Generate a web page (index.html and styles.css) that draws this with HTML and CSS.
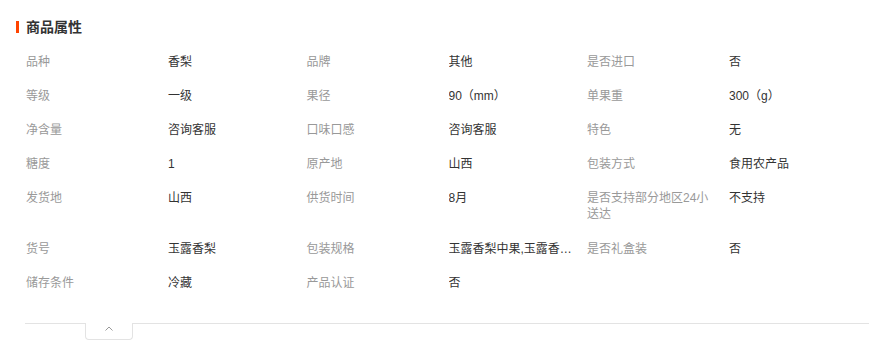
FILE: index.html
```html
<!DOCTYPE html>
<html lang="zh-CN">
<head>
<meta charset="utf-8">
<title>商品属性</title>
<link rel="stylesheet" href="styles.css">
</head>
<body>
<section class="attrs">
  <h2 class="attrs-title">商品属性</h2>
  <dl class="attrs-grid">
    <dt>品种</dt><dd>香梨</dd>
    <dt>品牌</dt><dd>其他</dd>
    <dt>是否进口</dt><dd>否</dd>

    <dt>等级</dt><dd>一级</dd>
    <dt>果径</dt><dd>90（mm）</dd>
    <dt>单果重</dt><dd>300（g）</dd>

    <dt>净含量</dt><dd>咨询客服</dd>
    <dt>口味口感</dt><dd>咨询客服</dd>
    <dt>特色</dt><dd>无</dd>

    <dt>糖度</dt><dd>1</dd>
    <dt>原产地</dt><dd>山西</dd>
    <dt>包装方式</dt><dd>食用农产品</dd>

    <dt>发货地</dt><dd>山西</dd>
    <dt>供货时间</dt><dd>8月</dd>
    <dt class="wrap">是否支持部分地区24小送达</dt><dd>不支持</dd>

    <dt>货号</dt><dd>玉露香梨</dd>
    <dt>包装规格</dt><dd title="玉露香梨中果,玉露香梨大果">玉露香梨中果,玉露香梨大果</dd>
    <dt>是否礼盒装</dt><dd>否</dd>

    <dt>储存条件</dt><dd>冷藏</dd>
    <dt>产品认证</dt><dd>否</dd>
  </dl>
  <div class="attrs-foot">
    <button class="fold-tab" type="button" aria-label="收起">
      <svg width="8" height="5" viewBox="0 0 8 5"><polyline points="0.5,4.5 4,1 7.5,4.5" fill="none" stroke="#999" stroke-width="1"/></svg>
    </button>
  </div>
</section>
</body>
</html>
```

FILE: styles.css
```css
* { box-sizing: border-box; }

html, body {
  margin: 0;
  padding: 0;
  background: #fff;
}

body {
  font-family: "Liberation Sans", "Noto Sans CJK SC", sans-serif;
  font-size: 12px;
  color: #333;
}

.attrs {
  padding: 20px 15px 0 16px;
}

.attrs-title {
  display: flex;
  align-items: center;
  gap: 7px;
  margin: 0;
  height: 14px;
  font-size: 14px;
  line-height: 14px;
  font-weight: bold;
  color: #333;
}

.attrs-title::before {
  content: "";
  width: 3px;
  height: 12px;
  background: #ff4400;
}

.attrs-grid {
  display: grid;
  grid-template-columns: 142px 138.5px 142px 138.5px 142px 1fr;
  margin: 11px 0 0 10px;
  padding: 0;
}

.attrs-grid dt,
.attrs-grid dd {
  margin: 0;
  padding: 9px 0;
  line-height: 16px;
}

.attrs-grid dt {
  color: #999;
  width: 126px;
}

.attrs-grid dt.wrap {
  padding-bottom: 10px;
}

.attrs-grid dd {
  color: #333;
  max-width: 125px;
  white-space: nowrap;
  overflow: hidden;
  text-overflow: ellipsis;
}

.attrs-foot {
  margin: 23px 0 0 9px;
  width: 844px;
  border-top: 1px solid #e3e3e3;
  padding-left: 60px;
  height: 24px;
}

.fold-tab {
  display: flex;
  align-items: flex-start;
  justify-content: center;
  margin-top: -1px;
  width: 48px;
  height: 17px;
  padding: 3px 0 0;
  background: #fff;
  border: 1px solid #e3e3e3;
  border-top: none;
  border-radius: 0 0 4px 4px;
  cursor: pointer;
}
```
